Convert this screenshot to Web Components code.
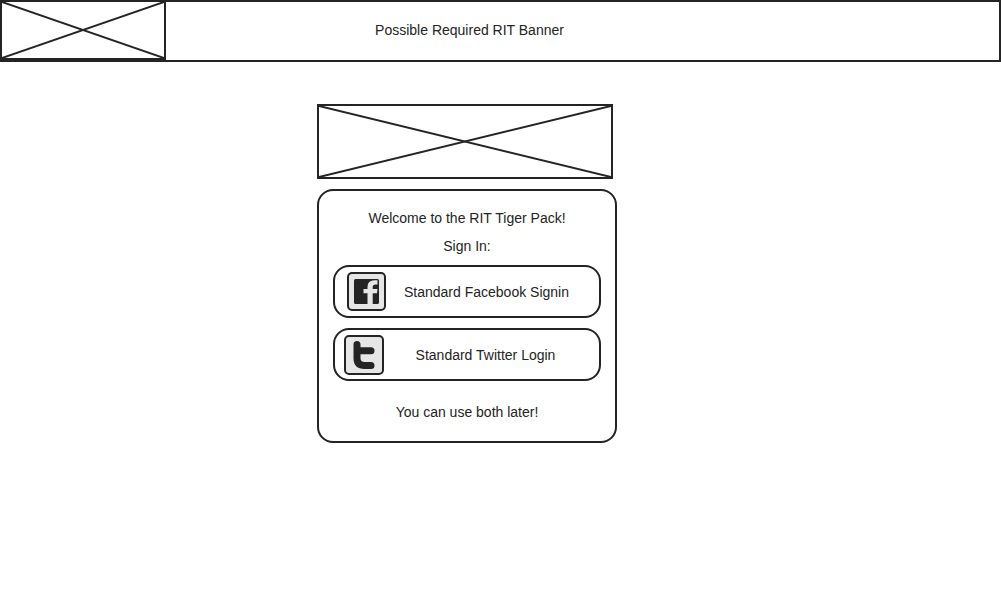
<!DOCTYPE html>
<html lang="en">
<head>
<meta charset="utf-8">
<meta name="viewport" content="width=device-width, initial-scale=1">
<title>RIT Tiger Pack</title>
<style>
  body {
    margin: 0;
    background: #fff;
    --ink: #242424;
    --tile: #e6e6e6;
    color: var(--ink);
    font: 14px/28px "Liberation Sans", Arial, sans-serif;
  }
</style>
</head>
<body>
<tiger-page></tiger-page>

<script>
  const define = (name, html) => {
    const template = document.createElement('template');
    template.innerHTML = html;
    customElements.define(name, class extends HTMLElement {
      constructor() {
        super();
        this.attachShadow({ mode: 'open' }).append(template.content.cloneNode(true));
      }
    });
  };

  // Box crossed by its two diagonals, standing for an image
  define('image-placeholder', `
    <style>
      :host { display: block; box-sizing: border-box; border: 2px solid var(--ink); }
      svg { display: block; width: 100%; height: 100%; overflow: hidden; }
      line { stroke: var(--ink); stroke-width: 2; }
    </style>
    <svg aria-hidden="true">
      <line x1="0" y1="0" x2="100%" y2="100%"/>
      <line x1="0" y1="100%" x2="100%" y2="0"/>
    </svg>`);

  define('site-banner', `
    <style>
      :host {
        display: grid;
        grid-template-columns: 166px 1fr 228px;
        grid-template-rows: 60px;
        padding-bottom: 2px;
        box-shadow: inset 0 0 0 2px var(--ink);
      }
      .title { text-align: center; align-self: center; }
    </style>
    <image-placeholder></image-placeholder>
    <div class="title"><slot></slot></div>`);

  define('facebook-icon', `
    <style>:host { display: block; } svg { display: block; }</style>
    <svg width="39" height="39" viewBox="0 0 39 39" aria-hidden="true">
      <rect x="1" y="1" width="37" height="37" rx="4" fill="var(--tile)" stroke="var(--ink)" stroke-width="2"/>
      <rect x="7" y="7" width="25" height="25" rx="1.500" fill="var(--ink)"/>
      <path d="M20.500 32V21.200H16.500V17H20.500V15Q20.500 8.300 27.500 8.300H30.500V12.500H28.500Q25.700 12.500 25.700 15V17H30.500L30 21.200H25.700V32Z" fill="var(--tile)"/>
    </svg>`);

  define('twitter-icon', `
    <style>:host { display: block; } svg { display: block; }</style>
    <svg width="40" height="40" viewBox="0 0 40 40" aria-hidden="true">
      <rect x="1" y="1" width="38" height="38" rx="4" fill="var(--tile)" stroke="var(--ink)" stroke-width="2"/>
      <path d="M13 9.500V23Q13 30.500 20.500 30.500H27M13 15.700H27" fill="none" stroke="var(--ink)" stroke-width="7" stroke-linecap="round"/>
    </svg>`);

  define('signin-button', `
    <style>
      :host { display: block; --lead: 12px; }
      button {
        display: flex;
        box-sizing: border-box;
        width: 100%;
        height: 53px;
        margin: 0;
        padding: 5px 12px 5px var(--lead);
        border: 2px solid var(--ink);
        border-radius: 16px;
        background: none;
        color: inherit;
        font: inherit;
        cursor: pointer;
      }
      .label { flex: 1; align-self: center; text-align: center; }
    </style>
    <button type="button">
      <slot name="icon"></slot>
      <span class="label"><slot></slot></span>
    </button>`);

  define('signin-panel', `
    <style>
      :host {
        display: block;
        box-sizing: border-box;
        padding: 13px 14px 15px;
        border: 2px solid var(--ink);
        border-radius: 16px;
        text-align: center;
      }
      h1, p { margin: 0; font: inherit; }
      .providers { display: grid; gap: 10px; margin: 5px 0 17px; }
      .compact { --lead: 9px; }
    </style>
    <h1>Welcome to the RIT Tiger Pack!</h1>
    <p>Sign In:</p>
    <div class="providers">
      <signin-button><facebook-icon slot="icon"></facebook-icon>Standard Facebook Signin</signin-button>
      <signin-button class="compact"><twitter-icon slot="icon"></twitter-icon>Standard Twitter Login</signin-button>
    </div>
    <p>You can use both later!</p>`);

  define('tiger-page', `
    <style>
      :host { display: block; }
      main {
        display: grid;
        grid-template-columns: minmax(0, 300px);
        justify-content: center;
        gap: 10px;
        padding: 42px 67px 42px 0;
      }
      .logo { height: 75px; margin-right: 4px; }
    </style>
    <site-banner>Possible Required RIT Banner</site-banner>
    <main>
      <image-placeholder class="logo"></image-placeholder>
      <signin-panel></signin-panel>
    </main>`);
</script>
</body>
</html>
